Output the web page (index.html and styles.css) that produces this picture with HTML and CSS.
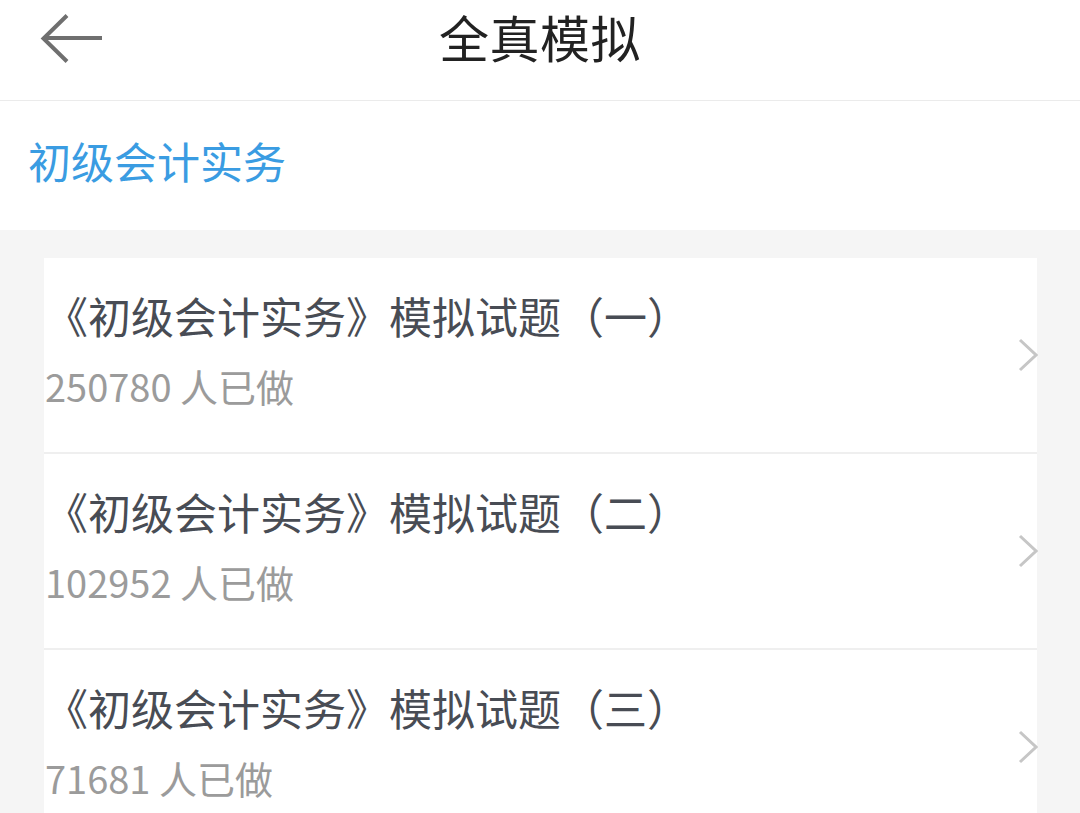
FILE: index.html
```html
<!DOCTYPE html>
<html lang="zh-CN">
<head>
<meta charset="utf-8">
<title>全真模拟</title>
<link rel="stylesheet" href="styles.css">
</head>
<body>
<header class="topbar">
  <button class="back" aria-label="返回">
    <svg width="64" height="50" viewBox="0 0 64 50"><path d="M62 24H3M27 1.5L3.5 24.5L27 47.5" fill="none" stroke="#6f6f6f" stroke-width="4"/></svg>
  </button>
  <h1 class="title">全真模拟</h1>
</header>
<section class="subject">初级会计实务</section>
<main class="content">
  <ul class="list">
    <li class="item">
      <div class="text">
        <div class="name">《初级会计实务》模拟试题（一）</div>
        <div class="count">250780 人已做</div>
      </div>
      <svg class="chev" width="20" height="34" viewBox="0 0 20 34"><path d="M2 2L18 17L2 32" fill="none" stroke="#c6c6c6" stroke-width="3"/></svg>
    </li>
    <li class="item">
      <div class="text">
        <div class="name">《初级会计实务》模拟试题（二）</div>
        <div class="count">102952 人已做</div>
      </div>
      <svg class="chev" width="20" height="34" viewBox="0 0 20 34"><path d="M2 2L18 17L2 32" fill="none" stroke="#c6c6c6" stroke-width="3"/></svg>
    </li>
    <li class="item">
      <div class="text">
        <div class="name">《初级会计实务》模拟试题（三）</div>
        <div class="count">71681 人已做</div>
      </div>
      <svg class="chev" width="20" height="34" viewBox="0 0 20 34"><path d="M2 2L18 17L2 32" fill="none" stroke="#c6c6c6" stroke-width="3"/></svg>
    </li>
  </ul>
</main>
</body>
</html>
```
FILE: styles.css
```css
* { box-sizing: border-box; }
html, body {
  margin: 0;
  padding: 0;
  background: #f5f5f5;
  font-family: "Noto Sans CJK SC", "Noto Sans", sans-serif;
}
.topbar {
  position: relative;
  height: 101px;
  background: #fff;
  border-bottom: 1px solid #ebebeb;
  display: flex;
  align-items: flex-start;
  justify-content: center;
}
.back {
  position: absolute;
  left: 40px;
  top: 14px;
  padding: 0;
  border: 0;
  background: none;
  line-height: 0;
}
.title {
  margin: 0;
  font-size: 50px;
  font-weight: 400;
  color: #222;
  line-height: normal;
  letter-spacing: 0.5px;
}
.subject {
  height: 129px;
  background: #fff;
  color: #3a9ce2;
  font-size: 43px;
  line-height: 1;
  padding: 38px 0 0 28px;
}
.content {
  padding: 28px 43px 0 44px;
}
.list {
  list-style: none;
  margin: 0;
  padding: 0;
  background: #fff;
}
.item {
  height: 196px;
  display: flex;
  align-items: center;
  border-bottom: 2px solid #efefef;
  padding-left: 1px;
}
.text {
  flex: 1;
  display: flex;
  flex-direction: column;
  gap: 24px;
  padding-bottom: 12px;
}
.name {
  font-size: 43px;
  line-height: 50px;
  color: #484c54;
}
.count {
  font-size: 38px;
  line-height: 44px;
  color: #9b9b9b;
}
.chev {
  flex: none;
  margin-right: -1px;
}
```
